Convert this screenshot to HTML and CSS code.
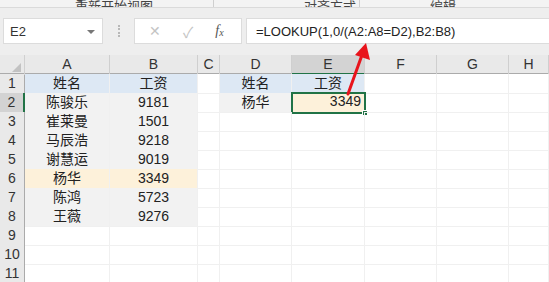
FILE: index.html
```html
<!DOCTYPE html>
<html lang="zh-CN">
  <head>
    <meta charset="UTF-8" />
    <title>LOOKUP</title>
    <link rel="stylesheet" href="styles.css">
  </head>
  <body>
    <div class="ribbon">
      <span class="tab tab-a">重新开始视图</span>
      <span class="sep"></span>
      <span class="tab tab-b">对齐方式</span>
      <span class="sep"></span>
      <span class="tab tab-c">编辑</span>
    </div>

    <div class="formula-bar">
      <div class="name-box">E2<span class="caret"></span></div>
      <div class="grip"></div>
      <div class="fx-buttons">
        <span class="fx-btn cancel">✕</span>
        <span class="fx-btn ok">✓</span>
        <span class="fx-btn fx"><i>f</i><sub>x</sub></span>
      </div>
      <div class="formula-input">=LOOKUP(1,0/(A2:A8=D2),B2:B8)</div>
    </div>

    <div class="sheet">
      <div class="row head">
        <div class="corner"><span class="tri"></span></div>
        <div class="ch">A</div><div class="ch">B</div><div class="ch">C</div><div class="ch">D</div>
        <div class="ch active">E</div><div class="ch">F</div><div class="ch">G</div><div class="ch">H</div>
      </div>
      <div class="row">
        <div class="rh">1</div>
        <div class="c blue">姓名</div><div class="c blue">工资</div><div class="c"></div>
        <div class="c blue">姓名</div><div class="c blue">工资</div><div class="c"></div><div class="c"></div><div class="c"></div>
      </div>
      <div class="row">
        <div class="rh active">2</div>
        <div class="c gray">陈骏乐</div><div class="c gray">9181</div><div class="c"></div>
        <div class="c gray">杨华</div><div class="c yellow num selected">3349<span class="handle"></span></div>
        <div class="c"></div><div class="c"></div><div class="c"></div>
      </div>
      <div class="row">
        <div class="rh">3</div>
        <div class="c gray">崔莱曼</div><div class="c gray">1501</div>
        <div class="c"></div><div class="c"></div><div class="c"></div><div class="c"></div><div class="c"></div><div class="c"></div>
      </div>
      <div class="row">
        <div class="rh">4</div>
        <div class="c gray">马辰浩</div><div class="c gray">9218</div>
        <div class="c"></div><div class="c"></div><div class="c"></div><div class="c"></div><div class="c"></div><div class="c"></div>
      </div>
      <div class="row">
        <div class="rh">5</div>
        <div class="c gray">谢慧运</div><div class="c gray">9019</div>
        <div class="c"></div><div class="c"></div><div class="c"></div><div class="c"></div><div class="c"></div><div class="c"></div>
      </div>
      <div class="row">
        <div class="rh">6</div>
        <div class="c yellow">杨华</div><div class="c yellow">3349</div>
        <div class="c"></div><div class="c"></div><div class="c"></div><div class="c"></div><div class="c"></div><div class="c"></div>
      </div>
      <div class="row">
        <div class="rh">7</div>
        <div class="c gray">陈鸿</div><div class="c gray">5723</div>
        <div class="c"></div><div class="c"></div><div class="c"></div><div class="c"></div><div class="c"></div><div class="c"></div>
      </div>
      <div class="row">
        <div class="rh">8</div>
        <div class="c gray">王薇</div><div class="c gray">9276</div>
        <div class="c"></div><div class="c"></div><div class="c"></div><div class="c"></div><div class="c"></div><div class="c"></div>
      </div>
      <div class="row">
        <div class="rh">9</div>
        <div class="c"></div><div class="c"></div><div class="c"></div><div class="c"></div><div class="c"></div><div class="c"></div><div class="c"></div><div class="c"></div>
      </div>
      <div class="row">
        <div class="rh">10</div>
        <div class="c"></div><div class="c"></div><div class="c"></div><div class="c"></div><div class="c"></div><div class="c"></div><div class="c"></div><div class="c"></div>
      </div>
      <div class="row">
        <div class="rh">11</div>
        <div class="c"></div><div class="c"></div><div class="c"></div><div class="c"></div><div class="c"></div><div class="c"></div><div class="c"></div><div class="c"></div>
      </div>
    </div>

    <svg class="arrow" width="549" height="282" viewBox="0 0 549 282">
      <line x1="348" y1="94" x2="362" y2="55" stroke="#e8141c" stroke-width="3" stroke-linecap="round" />
      <polygon points="366,43 370,60 355,55" fill="#e8141c" />
    </svg>
  </body>
</html>
```

FILE: styles.css
```css
* {
  box-sizing: border-box;
  margin: 0;
  padding: 0;
}

body {
  width: 549px;
  height: 282px;
  overflow: hidden;
  background: #ffffff;
  color: #222;
  font-family: "Liberation Sans", "Noto Sans CJK SC", sans-serif;
  position: relative;
}

/* ribbon (cut off at the top) */
.ribbon {
  height: 8px;
  display: flex;
  align-items: flex-end;
  background: #f3f3f3;
  border-bottom: 1px solid #dadada;
  overflow: hidden;
  font-size: 13px;
  color: #444;
}

.tab {
  line-height: 14px;
  margin-bottom: -7px;
}

.tab-a {
  margin-left: 75px;
  width: 138px;
}

.tab-b {
  margin-left: 90px;
  width: 55px;
}

.tab-c {
  margin-left: 70px;
}

.sep {
  width: 1px;
  height: 8px;
  background: #cfcfcf;
}

/* formula bar */
.formula-bar {
  height: 47px;
  display: flex;
  align-items: flex-start;
  padding-top: 10px;
  background: #eeeeee;
}

.name-box {
  width: 100px;
  height: 26px;
  margin-left: 3px;
  background: #fff;
  border: 1px solid #dcdcdc;
  display: flex;
  align-items: center;
  padding-left: 6px;
  font-size: 13px;
  color: #333;
  position: relative;
}

.caret {
  position: absolute;
  right: 7px;
  top: 11px;
  border-left: 4px solid transparent;
  border-right: 4px solid transparent;
  border-top: 4px solid #777;
}

.grip {
  width: 3px;
  height: 12px;
  margin: 7px 13px 0 15px;
  border-left: 2px dotted #b8b8b8;
}

.fx-buttons {
  width: 108px;
  height: 26px;
  background: #fff;
  border: 1px solid #dcdcdc;
  display: flex;
  align-items: center;
}

.fx-btn {
  font-size: 14px;
  color: #c4c4c4;
}

.cancel {
  margin-left: 14px;
}

.ok {
  margin-left: 22px;
  font-size: 15px;
}

.fx {
  margin-left: 22px;
  color: #555;
  font-family: "Liberation Serif", serif;
  font-size: 14px;
}

.fx sub {
  font-size: 10px;
  font-style: italic;
  vertical-align: -1px;
}

.formula-input {
  flex: 1;
  height: 26px;
  margin-left: 4px;
  background: #fff;
  border: 1px solid #dcdcdc;
  border-right: none;
  display: flex;
  align-items: center;
  padding-left: 9px;
  font-size: 13px;
  color: #222;
}

/* sheet grid */
.row {
  display: grid;
  grid-template-columns: 25px 85px 88px 22px 72px 73px 72px 72px 40px;
  height: 19px;
}

.row.head {
  height: 19px;
  background: #e9e9e9;
  border-bottom: 1px solid #ababab;
}

.corner {
  position: relative;
  border-right: 1px solid #d0d0d0;
}

.tri {
  position: absolute;
  right: 3px;
  bottom: 3px;
  border-left: 9px solid transparent;
  border-bottom: 9px solid #c2c2c2;
}

.ch {
  text-align: center;
  font-size: 14px;
  line-height: 18px;
  color: #333;
  border-right: 1px solid #cfcfcf;
}

.ch.active {
  background: #d3d3d3;
  border-bottom: 2px solid #217346;
}

.rh {
  background: #e9e9e9;
  border-right: 1px solid #ababab;
  border-bottom: 1px solid #d6d6d6;
  font-size: 14px;
  line-height: 19px;
  text-align: center;
  color: #333;
}

.rh.active {
  background: #d3d3d3;
  border-right: 2px solid #217346;
}

.c {
  border-right: 1px solid #f0f0f0;
  border-bottom: 1px solid #f0f0f0;
  font-size: 14px;
  line-height: 19px;
  text-align: center;
  color: #222;
  position: relative;
}

.c.blue {
  background: #dde8f4;
}

.c.gray {
  background: #f2f2f2;
}

.c.yellow {
  background: #fdf1da;
}

.c.num {
  text-align: right;
  padding-right: 3px;
}

.c.selected {
  outline: 2px solid #217346;
  outline-offset: -1px;
  line-height: 17px;
}

.handle {
  position: absolute;
  right: -4px;
  bottom: -4px;
  width: 6px;
  height: 6px;
  background: #217346;
  border: 1px solid #fff;
}

/* annotation arrow */
.arrow {
  position: absolute;
  left: 0;
  top: 0;
  pointer-events: none;
}
```
